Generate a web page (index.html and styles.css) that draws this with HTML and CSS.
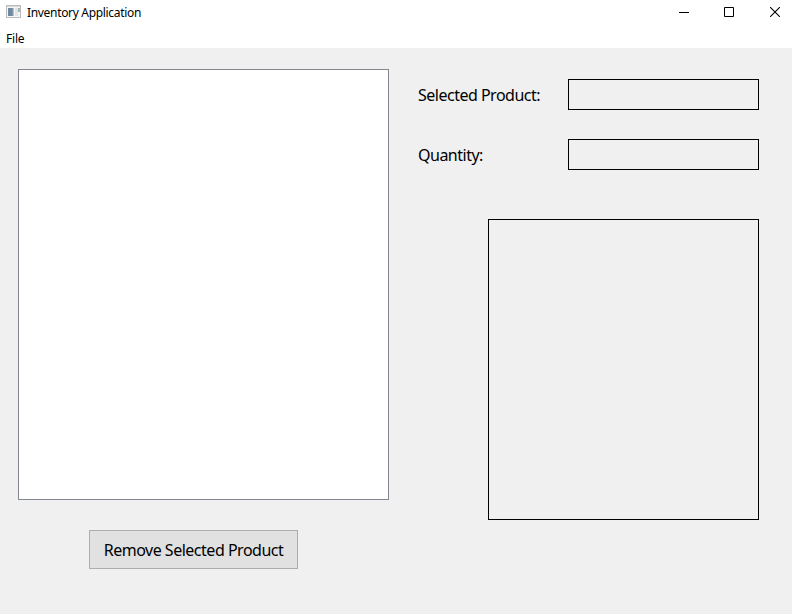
FILE: index.html
```html
<!DOCTYPE html>
<html lang="en">
<head>
<meta charset="utf-8">
<title>Inventory Application</title>
<link rel="stylesheet" href="styles.css">
</head>
<body>
<header class="titlebar">
  <svg class="app-icon" width="16" height="16" viewBox="0 0 16 16" shape-rendering="crispEdges">
    <rect x=".5" y="1.5" width="14" height="12" fill="#f4f5f4" stroke="#b9bfbd"/>
    <rect x="1" y="2" width="13" height="1" fill="#d5dad8"/>
    <rect x="2" y="4" width="6" height="8" fill="#7089a3"/>
    <rect x="6" y="4" width="1" height="8" fill="#8398a9"/>
    <rect x="7" y="4" width="1" height="8" fill="#b4c0c8"/>
    <rect x="9" y="4" width="3" height="8" fill="#e0e4e7"/>
    <rect x="12" y="4" width="2" height="4" fill="#a9b4b9"/>
  </svg>
  <span class="title">Inventory Application</span>
  <div class="controls">
    <svg width="10" height="10" viewBox="0 0 10 10"><path d="M0 5.5H10" stroke="#000"/></svg>
    <svg width="10" height="10" viewBox="0 0 10 10"><path d="M.5 .5H9.5V9.5H.5Z" fill="none" stroke="#000"/></svg>
    <svg width="10" height="10" viewBox="0 0 10 10"><path d="M0 0L10 10M10 0L0 10" stroke="#000" stroke-width="1.1"/></svg>
  </div>
</header>
<nav class="menubar"><span class="menu-item">File</span></nav>
<main class="content">
  <section class="inventory">
    <div class="product-list"></div>
    <button class="remove">Remove Selected Product</button>
  </section>
  <section class="details">
    <div class="row"><span class="label product">Selected Product:</span><div class="field"></div></div>
    <div class="row"><span class="label quantity">Quantity:</span><div class="field"></div></div>
    <div class="preview"></div>
  </section>
</main>
</body>
</html>
```
FILE: styles.css
```css
* { box-sizing: border-box; }
body {
  margin: 0;
  height: 614px;
  overflow: hidden;
  display: flex;
  flex-direction: column;
  background: #f0f0f0;
  color: #000;
  font-family: "Noto Sans", sans-serif;
  font-size: 16px;
}
.titlebar {
  display: flex;
  height: 26px;
  padding: 0 12px 0 6px;
  background: #fff;
}
.app-icon { margin: 4px 5px 0 0; }
.title {
  font-size: 12px;
  line-height: 26px;
  letter-spacing: -0.32px;
  white-space: nowrap;
}
.controls {
  display: flex;
  gap: 35px;
  margin: 7px 0 0 auto;
}
.controls svg:last-child { margin-left: 1px; }
.menubar {
  height: 22px;
  padding-left: 6px;
  background: #fff;
  font-size: 12px;
  line-height: 26px;
  letter-spacing: -0.2px;
}
.content {
  flex: 1;
  display: flex;
  gap: 29px;
  padding: 21px 33px 0 18px;
}
.inventory { width: 371px; }
.product-list {
  height: 431px;
  border: 1px solid #828790;
  background: #fff;
}
.remove {
  display: block;
  width: 209px;
  height: 39px;
  margin: 30px 0 0 71px;
  padding: 0;
  border: 1px solid #adadad;
  background: #e1e1e1;
  color: #000;
  font: inherit;
  letter-spacing: -0.49px;
  white-space: nowrap;
}
.details {
  flex: 1;
  display: flex;
  flex-direction: column;
  padding-top: 10px;
}
.row {
  display: flex;
  justify-content: space-between;
  height: 31px;
  margin-bottom: 29px;
}
.label {
  line-height: 33px;
  letter-spacing: -0.5px;
  white-space: nowrap;
}
.field {
  width: 191px;
  border: 1px solid #000;
}
.preview {
  align-self: flex-end;
  width: 271px;
  height: 301px;
  margin-top: 20px;
  border: 1px solid #000;
}
```
